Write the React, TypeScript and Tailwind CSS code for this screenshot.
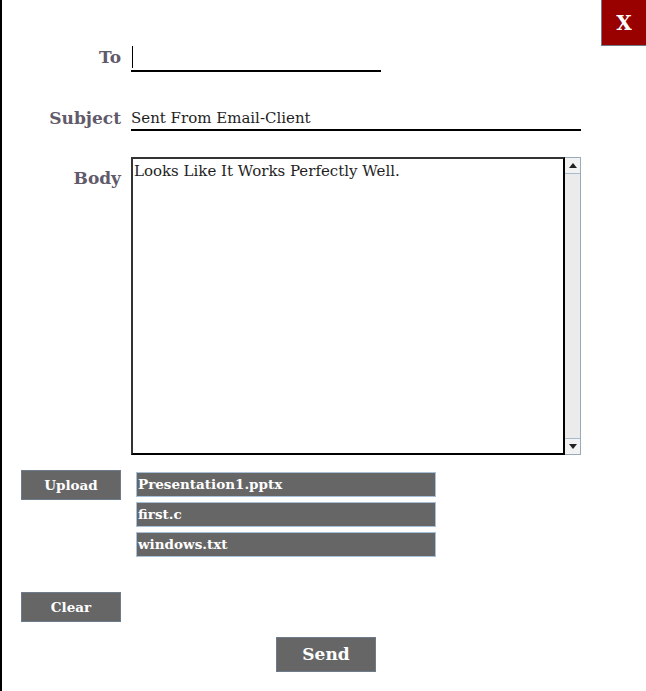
import React from "react";

const files = ["Presentation1.pptx", "first.c", "windows.txt"];

const serif = { fontFamily: '"DejaVu Serif", "Liberation Serif", serif' };

export default function App() {
  return (
    <div
      className="relative w-[646px] h-[691px] bg-white border-l-2 border-black overflow-hidden"
      style={serif}
    >
      {/* Close */}
      <div className="flex justify-end">
        <button className="w-[45px] h-[46px] bg-[#990000] border-l border-b border-[#6d7b8a] text-white font-bold text-[20px] leading-none">
          X
        </button>
      </div>

      {/* To */}
      <div className="flex items-end h-[26px]">
        <div className="w-[119px] text-right font-bold text-[17px] text-[#605a6a] leading-none pb-[6px]">
          To
        </div>
        <div className="ml-[10px] w-[250px] h-[26px] border-b-2 border-black relative">
          <div className="absolute left-[1px] top-0 w-px h-[22px] bg-black" />
        </div>
      </div>

      {/* Subject */}
      <div className="flex items-end h-[26px] mt-[33px]">
        <div className="w-[119px] text-right font-bold text-[17px] text-[#605a6a] leading-none pb-[4px]">
          Subject
        </div>
        <div className="ml-[10px] w-[450px] h-[26px] border-b-2 border-black text-[15px] text-[#1e1e1e] leading-none flex items-end pb-[3px]">
          Sent From Email-Client
        </div>
      </div>

      {/* Body */}
      <div className="flex mt-[26px]">
        <div className="w-[119px] text-right font-bold text-[17px] text-[#605a6a] leading-none pt-[13px]">
          Body
        </div>
        <div className="ml-[10px] flex h-[298px]">
          <div className="w-[434px] h-full border-2 border-black border-t-[#333] border-l-[#333] text-[15px] text-[#1e1e1e] px-[1px] pt-[3px] leading-tight">
            Looks Like It Works Perfectly Well.
          </div>
          <div className="w-[16px] h-full bg-[#ebebeb] border border-[#9aaabb] border-l-0 flex flex-col justify-between">
            <div className="h-[16px] bg-[#f2f2f2] border-b border-[#a8bccf] flex items-center justify-center">
              <div className="w-0 h-0 border-l-[4px] border-r-[4px] border-b-[5px] border-l-transparent border-r-transparent border-b-[#222]" />
            </div>
            <div className="h-[16px] bg-[#f2f2f2] border-t border-[#a8bccf] flex items-center justify-center">
              <div className="w-0 h-0 border-l-[4px] border-r-[4px] border-t-[5px] border-l-transparent border-r-transparent border-t-[#222]" />
            </div>
          </div>
        </div>
      </div>

      {/* Upload + files */}
      <div className="flex items-start mt-[15px] ml-[19px]">
        <button className="w-[100px] h-[30px] bg-[#666666] border border-[#6d7b8a] text-white font-bold text-[13.5px]">
          Upload
        </button>
        <div className="ml-[15px] mt-[2px] flex flex-col gap-[5px]">
          {files.map((f) => (
            <div
              key={f}
              className="w-[300px] h-[25px] bg-[#666666] border border-[#a8c0d8] text-white font-bold text-[13.5px] px-[1px] flex items-center"
            >
              {f}
            </div>
          ))}
        </div>
      </div>

      {/* Clear */}
      <div className="mt-[35px] ml-[19px]">
        <button className="w-[100px] h-[30px] bg-[#666666] border border-[#6d7b8a] text-white font-bold text-[13.5px]">
          Clear
        </button>
      </div>

      {/* Send */}
      <div className="mt-[15px] ml-[274px]">
        <button className="w-[100px] h-[35px] bg-[#666666] border border-[#6d7b8a] text-white font-bold text-[17px]">
          Send
        </button>
      </div>
    </div>
  );
}
